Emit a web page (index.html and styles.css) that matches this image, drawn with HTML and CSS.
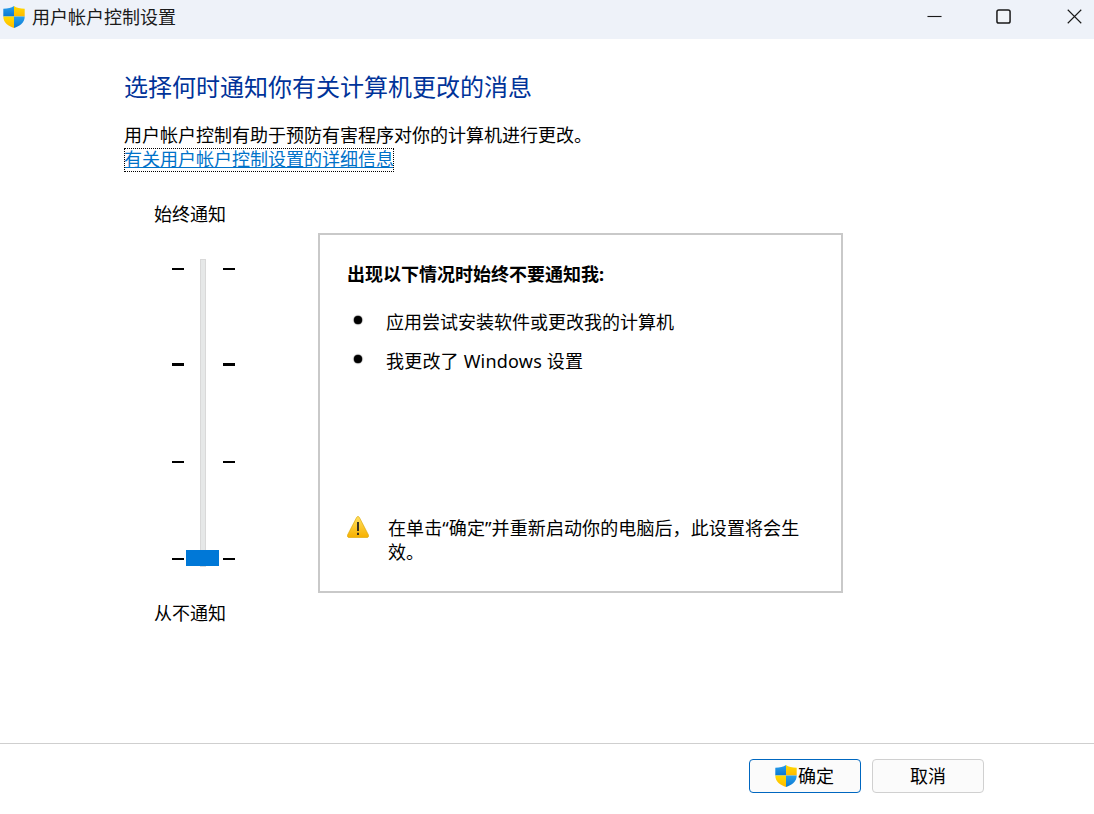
FILE: index.html
```html
<!DOCTYPE html>
<html lang="zh-CN">
<head>
<meta charset="utf-8">
<title>用户帐户控制设置</title>
<link rel="stylesheet" href="styles.css">
</head>
<body>
<svg class="defs" width="0" height="0" aria-hidden="true">
  <defs>
    <linearGradient id="sy" x1="0" y1="0" x2="0" y2="1"><stop offset="0" stop-color="#ffdc00"/><stop offset="1" stop-color="#ffb900"/></linearGradient>
    <linearGradient id="sb" x1="0" y1="0" x2="0" y2="1"><stop offset="0" stop-color="#2aa0ec"/><stop offset="1" stop-color="#0a78d2"/></linearGradient>
    <symbol id="shield" viewBox="0 0 22 22">
      <path d="M11 0C8.500 1.800 5 2.800 0.300 2.800V10.500H11Z" fill="url(#sb)"/>
      <path d="M11 0C13.500 1.800 17 2.800 21.700 2.800V10.500H11Z" fill="url(#sy)"/>
      <path d="M0.300 10.500H11V22C5.500 20 0.300 17 0.300 10.500Z" fill="url(#sy)"/>
      <path d="M21.700 10.500H11V22C16.500 20 21.700 17 21.700 10.500Z" fill="url(#sb)"/>
    </symbol>
  </defs>
</svg>
<div class="window">
  <header class="titlebar">
    <svg class="title-icon"><use href="#shield"/></svg>
    <span class="title-text">用户帐户控制设置</span>
    <div class="controls">
      <svg class="ctl" viewBox="0 0 16 16"><path d="M0.500 8H15.500" stroke="#1a1a1a" stroke-width="1.200" fill="none"/></svg>
      <svg class="ctl ctl-max" viewBox="0 0 16 16"><rect x="1" y="1" width="14" height="14" rx="2" stroke="#1a1a1a" stroke-width="1.600" fill="#f0f3f7"/></svg>
      <svg class="ctl" viewBox="0 0 16 16"><path d="M0.800 0.800L15.200 15.200M15.200 0.800L0.800 15.200" stroke="#1a1a1a" stroke-width="1.200" fill="none"/></svg>
    </div>
  </header>
  <main class="content">
    <h1 class="heading">选择何时通知你有关计算机更改的消息</h1>
    <p class="intro">用户帐户控制有助于预防有害程序对你的计算机进行更改。</p>
    <a class="more" href="#">有关用户帐户控制设置的详细信息</a>
    <div class="settings">
      <div class="slider-col">
        <div class="slider-label">始终通知</div>
        <div class="slider">
          <div class="track"></div>
          <div class="tick-row"><i class="tick"></i><i class="tick"></i></div>
          <div class="tick-row thick"><i class="tick"></i><i class="tick"></i></div>
          <div class="tick-row"><i class="tick"></i><i class="tick"></i></div>
          <div class="tick-row"><i class="tick"></i><i class="tick"></i></div>
          <div class="thumb"></div>
        </div>
        <div class="slider-label bottom-label">从不通知</div>
      </div>
      <section class="panel">
        <h2 class="panel-title">出现以下情况时始终不要通知我:</h2>
        <ul class="panel-list">
          <li>应用尝试安装软件或更改我的计算机</li>
          <li class="latin-item">我更改了 Windows 设置</li>
        </ul>
        <div class="notice">
          <svg class="warn" viewBox="0 0 22 22">
            <defs><linearGradient id="wg" x1="0" y1="0" x2="0" y2="1"><stop offset="0" stop-color="#ffe060"/><stop offset="1" stop-color="#f7b000"/></linearGradient></defs>
            <path d="M11 0.500C10.200 0.500 9.800 1 9.400 1.800L0.500 19C0 20.200 0.500 21.500 2 21.500H20C21.500 21.500 22 20.200 21.500 19L12.600 1.800C12.200 1 11.800 0.500 11 0.500Z" fill="url(#wg)" stroke="#d9a400" stroke-width="0.600"/>
            <path d="M11 6V15" stroke="#222" stroke-width="1.800"/>
            <path d="M11 16.800V19" stroke="#222" stroke-width="1.800"/>
          </svg>
          <p class="notice-text">在单击“确定”并重新启动你的电脑后，此设置将会生效。</p>
        </div>
      </section>
    </div>
  </main>
  <footer class="footer">
    <button class="btn primary" type="button"><svg class="btn-icon"><use href="#shield"/></svg>确定</button>
    <button class="btn" type="button">取消</button>
  </footer>
</div>
</body>
</html>
```
FILE: styles.css
```css
* { box-sizing: border-box; }
html, body { margin: 0; height: 100%; background: #fff; }
body {
  font-family: "Noto Sans", "Noto Sans CJK SC", sans-serif;
  font-size: 18px;
  color: #000;
  overflow: hidden;
}
.defs { position: absolute; }
.window { width: 1094px; height: 814px; display: flex; flex-direction: column; }
.titlebar {
  height: 39px;
  flex: none;
  background: #eef2f9;
  display: flex;
  align-items: center;
  padding: 0 0 6px 3px;
}
.title-icon { width: 22px; height: 22px; flex: none; }
.title-text { margin-left: 7px; font-size: 18px; line-height: 24px; color: #1a1a1a; }
.controls { margin-left: auto; display: flex; align-items: center; padding-right: 12px; gap: 55px; }
.ctl { width: 15px; height: 15px; display: block; }
.ctl-max { margin: 0 1px 0 -1px; }
.content { flex: 1; padding: 0 0 0 124px; display: flex; flex-direction: column; align-items: flex-start; }
.heading {
  margin: 31px 0 0;
  font-size: 24px;
  font-weight: 400;
  line-height: 34px;
  color: #003399;
}
.intro { margin: 18px 0 0; line-height: 26px; height: 26px; }
.more {
  color: #0072c9;
  line-height: 22px;
  height: 24px;
  outline: 1px dotted #000;
  outline-offset: -1px;
  text-decoration: underline;
}
.settings { display: flex; align-items: flex-start; margin-top: 29px; }
.slider-col { width: 194px; display: flex; flex-direction: column; padding-left: 30px; }
.slider-label { line-height: 26px; }
.slider {
  position: relative;
  width: 63px;
  height: 308px;
  margin: 32px 0 0 18px;
  padding-top: 9px;
  display: grid;
  grid-template-rows: 95px 98px 97px 1fr;
}
.track {
  position: absolute;
  left: 28px;
  top: 0;
  width: 6px;
  height: 308px;
  background: #e6e8e8;
  border: 1px solid #d9d9d9;
}
.tick-row { display: flex; justify-content: space-between; }
.tick { display: block; width: 12px; height: 2px; background: #000; }
.thick .tick { height: 3px; }
.thumb {
  position: absolute;
  left: 14px;
  top: 291px;
  width: 33px;
  height: 16px;
  background: #0078d7;
}
.bottom-label { margin-top: 33px; }
.panel {
  width: 525px;
  height: 360px;
  border: 2px solid #c9c9c9;
  margin-top: 32px;
  padding: 26px 26px 0 27px;
  display: flex;
  flex-direction: column;
}
.panel-title { margin: 0; font-size: 18px; font-weight: 700; line-height: 26px; }
.panel-list { list-style: none; margin: 22px 0 0; padding: 0 0 0 39px; }
.panel-list li { position: relative; line-height: 26px; margin-bottom: 13px; }
.panel-list li::before {
  content: "";
  position: absolute;
  left: -32px;
  top: 7px;
  width: 8px;
  height: 8px;
  border-radius: 50%;
  background: #000;
  box-shadow: 0 0 1px 0.500px rgba(0,0,0,0.700);
}
.panel-list .latin-item { letter-spacing: 0.200px; }
.notice { display: flex; margin-top: 129px; align-items: flex-start; }
.warn { width: 22px; height: 22px; flex: none; }
.notice-text { margin: 0 0 0 19px; line-height: 24px; width: 420px; letter-spacing: 0.100px; }
.footer {
  height: 71px;
  flex: none;
  border-top: 1px solid #cfcfcf;
  display: flex;
  justify-content: flex-end;
  align-items: flex-start;
  gap: 11px;
  padding: 15px 110px 0 0;
}
.btn {
  width: 112px;
  height: 34px;
  border: 1px solid #d0d0d0;
  border-radius: 4px;
  background: #fbfbfb;
  font: inherit;
  line-height: 24px;
  color: #000;
  padding: 0;
  display: flex;
  align-items: center;
  justify-content: center;
}
.btn.primary { border-color: #0067c0; }
.btn-icon { width: 22px; height: 24px; flex: none; margin: 0 1px 0 -1px; }
```
